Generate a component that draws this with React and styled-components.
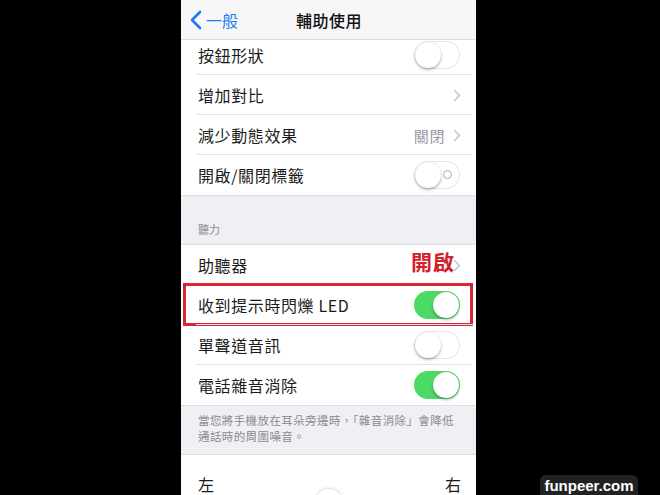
import React from "react";
import styled, { createGlobalStyle } from "styled-components";

const Global = createGlobalStyle`
  html, body { margin: 0; padding: 0; background: #000; }
  body { width: 660px; height: 495px; overflow: hidden; }
  #root { height: 495px; }
`;

const Page = styled.div`
  position: relative;
  height: 495px;
  background: #000;
  display: flex;
  padding-left: 181px;
  font-family: "Noto Sans CJK TC", "Noto Sans", sans-serif;
`;

const Screen = styled.div`
  width: 295px;
  height: 495px;
  background: #efeff4;
  display: flex;
  flex-direction: column;
  overflow: hidden;
`;

const NavBar = styled.div`
  flex: 0 0 39px;
  background: #f7f7f8;
  border-bottom: 1px solid #dcdce0;
  display: grid;
  grid-template-columns: 1fr auto 1fr;
  align-items: center;
  padding: 0 8px 0 9px;
`;

const Back = styled.div`
  display: flex;
  align-items: center;
  gap: 4px;
  color: #1f7bf0;
  font-size: 16px;
`;

const Title = styled.div`
  font-size: 16px;
  font-weight: 500;
  color: #111;
  letter-spacing: 0.5px;
`;

const Viewport = styled.div`
  flex: 1;
  overflow: hidden;
`;

const Content = styled.div`
  margin-top: -5px;
  display: flex;
  flex-direction: column;
`;

const Group = styled.div`
  background: #fff;
  display: flex;
  flex-direction: column;
`;

const Row = styled.div`
  position: relative;
  height: 40px;
  display: flex;
  align-items: center;
  padding: 0 15px 0 17px;
  color: #1c1c1c;
  font-size: 16px;
  letter-spacing: 0.6px;
  &::after {
    content: "";
    display: ${(p) => (p.$last ? "none" : "block")};
    position: absolute;
    left: 15px;
    right: 3px;
    bottom: 0;
    height: 1px;
    background: #e3e3e6;
  }
`;

const Label = styled.span`
  flex: 1;
`;

const Detail = styled.span`
  color: #9a9aa0;
  font-size: 15px;
  margin-right: 8px;
`;

const Annotation = styled.span`
  color: #d4202b;
  font-size: 21px;
  font-weight: 700;
  letter-spacing: 1px;
  margin-right: -2px;
  margin-bottom: 8px;
`;

const Highlight = styled.div`
  position: absolute;
  left: 2px;
  right: 3px;
  top: -2px;
  bottom: -1px;
  border: 3px solid #d52830;
  pointer-events: none;
`;

const Track = styled.div`
  position: relative;
  width: 46px;
  height: 28px;
  border-radius: 14px;
  box-sizing: border-box;
  background: ${(p) => (p.$on ? "#4cd964" : "#fff")};
  border: ${(p) => (p.$on ? "none" : "1.5px solid #e4e4e7")};
  margin-right: 1px;
`;

const Knob = styled.div`
  position: absolute;
  top: ${(p) => (p.$on ? "1px" : "-0.5px")};
  ${(p) => (p.$on ? "right: 1px;" : "left: -0.5px;")}
  width: 26px;
  height: 26px;
  border-radius: 50%;
  background: #fff;
  box-shadow: 0 2px 3px rgba(0, 0, 0, 0.25), 0 0 0 0.5px rgba(0, 0, 0, 0.08);
`;

const OffMark = styled.div`
  position: absolute;
  right: 7px;
  top: 8px;
  width: 7px;
  height: 7px;
  border: 1.5px solid #a8a8ad;
  border-radius: 50%;
`;

const SectionHeader = styled.div`
  height: 50px;
  display: flex;
  align-items: flex-end;
  padding: 0 0 7px 17px;
  box-sizing: border-box;
  font-size: 11px;
  color: #8e8e93;
  border-top: 1px solid #e0e0e4;
  border-bottom: 1px solid #e0e0e4;
`;

const Footer = styled.div`
  padding: 6px 12px 10px 17px;
  font-size: 11.5px;
  line-height: 16px;
  color: #8a8a90;
  letter-spacing: 0.4px;
  border-top: 1px solid #e0e0e4;
  border-bottom: 1px solid #e0e0e4;
`;

const BalanceRow = styled.div`
  position: relative;
  height: 40px;
  box-sizing: border-box;
  overflow: hidden;
  background: #fff;
  display: flex;
  justify-content: space-between;
  align-items: flex-start;
  padding: 20px 15px 0 17px;
  font-size: 16px;
  line-height: 18px;
  color: #1c1c1c;
`;

const SliderThumb = styled.div`
  position: absolute;
  left: 134px;
  bottom: -22px;
  width: 28px;
  height: 28px;
  border-radius: 50%;
  background: #fff;
  box-shadow: 0 -1px 3px rgba(0, 0, 0, 0.15);
`;

const Watermark = styled.div`
  position: absolute;
  left: 540px;
  bottom: 0;
  width: 98px;
  height: 20px;
  background: #222;
  border-radius: 6px 6px 0 0;
  color: #fff;
  font-family: "Liberation Sans", "DejaVu Sans", sans-serif;
  font-weight: 700;
  font-size: 15px;
  display: flex;
  align-items: center;
  justify-content: center;
`;

const Chevron = ({ color = "#c7c7cc" }) => (
  <svg width="8" height="13" viewBox="0 0 8 13">
    <path d="M1.5 1.5 L6.5 6.5 L1.5 11.5" fill="none" stroke={color} strokeWidth="1.6" strokeLinecap="round" strokeLinejoin="round" />
  </svg>
);

const BackChevron = () => (
  <svg width="12" height="20" viewBox="0 0 12 20">
    <path d="M10 2 L2 10 L10 18" fill="none" stroke="#1f7bf0" strokeWidth="2.6" strokeLinecap="round" strokeLinejoin="round" />
  </svg>
);

const Toggle = ({ on, mark }) => (
  <Track $on={on}>
    {mark && !on && <OffMark />}
    <Knob $on={on} />
  </Track>
);

export default function App() {
  return (
    <>
      <Global />
      <Page>
        <Screen>
          <NavBar>
            <Back>
              <BackChevron />
              <span>一般</span>
            </Back>
            <Title>輔助使用</Title>
            <div />
          </NavBar>
          <Viewport>
            <Content>
              <Group>
                <Row>
                  <Label>按鈕形狀</Label>
                  <Toggle />
                </Row>
                <Row>
                  <Label>增加對比</Label>
                  <Chevron />
                </Row>
                <Row>
                  <Label>減少動態效果</Label>
                  <Detail>關閉</Detail>
                  <Chevron />
                </Row>
                <Row $last>
                  <Label>開啟/關閉標籤</Label>
                  <Toggle mark />
                </Row>
              </Group>
              <SectionHeader>聽力</SectionHeader>
              <Group>
                <Row>
                  <Label>助聽器</Label>
                  <Annotation>開啟</Annotation>
                  <Chevron />
                </Row>
                <Row>
                  <Label>收到提示時閃爍 LED</Label>
                  <Toggle on />
                  <Highlight />
                </Row>
                <Row>
                  <Label>單聲道音訊</Label>
                  <Toggle />
                </Row>
                <Row $last>
                  <Label>電話雜音消除</Label>
                  <Toggle on />
                </Row>
              </Group>
              <Footer>
                當您將手機放在耳朵旁邊時，「雜音消除」會降低
                <br />
                通話時的周圍噪音。
              </Footer>
              <BalanceRow>
                <span>左</span>
                <span>右</span>
                <SliderThumb />
              </BalanceRow>
            </Content>
          </Viewport>
        </Screen>
        <Watermark>funpeer.com</Watermark>
      </Page>
    </>
  );
}
